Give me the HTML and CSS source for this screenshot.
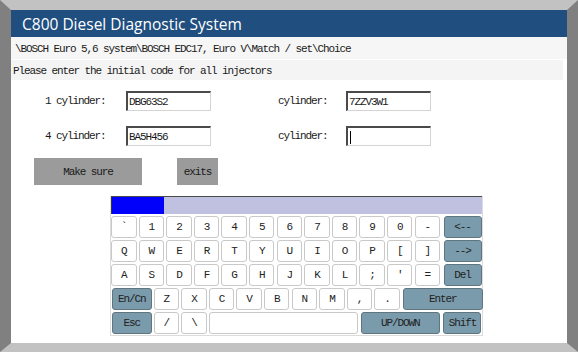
FILE: index.html
```html
<!DOCTYPE html>
<html>
<head>
<meta charset="utf-8">
<link rel="stylesheet" href="styles.css">
</head>
<body>
<div class="frame">
  <div class="screen">
    <div class="header">C800 Diesel Diagnostic System</div>
    <div class="path">\BOSCH Euro 5,6 system\BOSCH EDC17, Euro V\Match / set\Choice</div>
    <div class="prompt">Please enter the initial code for all injectors</div>
    <div class="form">
      <div class="label">1 cylinder:</div>
      <div class="field">DBG63S2</div>
      <div class="label label-r">cylinder:</div>
      <div class="field">7ZZV3W1</div>
      <div class="label">4 cylinder:</div>
      <div class="field">BA5H456</div>
      <div class="label label-r">cylinder:</div>
      <div class="field"><span class="caret"></span></div>
    </div>
    <div class="actions">
      <div class="btn btn-sure">Make sure</div>
      <div class="btn btn-exit">exits</div>
    </div>
    <div class="keyboard">
      <div class="kb-bar"><div class="kb-sel"></div></div>
      <div class="kb-row">
        <div class="key">`</div><div class="key">1</div><div class="key">2</div><div class="key">3</div><div class="key">4</div><div class="key">5</div><div class="key">6</div><div class="key">7</div><div class="key">8</div><div class="key">9</div><div class="key">0</div><div class="key">-</div>
        <div class="key fn fn-s gapl">&lt;--</div>
      </div>
      <div class="kb-row">
        <div class="key">Q</div><div class="key">W</div><div class="key">E</div><div class="key">R</div><div class="key">T</div><div class="key">Y</div><div class="key">U</div><div class="key">I</div><div class="key">O</div><div class="key">P</div><div class="key">[</div><div class="key">]</div>
        <div class="key fn fn-s gapl">--&gt;</div>
      </div>
      <div class="kb-row">
        <div class="key">A</div><div class="key">S</div><div class="key">D</div><div class="key">F</div><div class="key">G</div><div class="key">H</div><div class="key">J</div><div class="key">K</div><div class="key">L</div><div class="key">;</div><div class="key">'</div><div class="key">=</div>
        <div class="key fn fn-s gapl">Del</div>
      </div>
      <div class="kb-row">
        <div class="key fn fn-m">En/Cn</div>
        <div class="key">Z</div><div class="key">X</div><div class="key">C</div><div class="key">V</div><div class="key">B</div><div class="key">N</div><div class="key">M</div><div class="key">,</div><div class="key">.</div>
        <div class="key fn fn-enter">Enter</div>
      </div>
      <div class="kb-row">
        <div class="key fn fn-m">Esc</div>
        <div class="key">/</div><div class="key">\</div>
        <div class="key space"></div>
        <div class="key fn fn-up">UP/DOWN</div>
        <div class="key fn fn-s gapl">Shift</div>
      </div>
    </div>
  </div>
</div>
</body>
</html>
```
FILE: styles.css
```css
* { box-sizing: border-box; }
html, body { margin: 0; padding: 0; background: #c0c0c0; }
.frame {
  width: 578px;
  height: 352px;
  border-style: solid;
  border-width: 10px 11px 9px 11px;
  border-color: #c2c2c2 #808080 #c2c2c2 #808080;
}
.screen {
  width: 556px;
  height: 333px;
  background: #ffffff;
  display: flex;
  flex-direction: column;
  font-family: "Liberation Mono", "DejaVu Sans Mono", monospace;
  font-size: 11px;
  letter-spacing: -1.1px;
  color: #1a1a1a;
}
.header {
  height: 27px;
  background: #1f4e7f;
  color: #ffffff;
  font-family: "Open Sans", "Noto Sans", sans-serif;
  font-size: 15.5px;
  letter-spacing: 0;
  line-height: 29px;
  padding-left: 11px;
}
.path {
  height: 23px;
  line-height: 25px;
  background: #f6f6f6;
  padding-left: 4px;
  border-bottom: 1px solid #ffffff;
}
.prompt {
  height: 20px;
  line-height: 23px;
  background: #f4f4f4;
  margin-right: 4px;
  padding-left: 2px;
}
.form {
  display: grid;
  grid-template-columns: 81px 85px 135px 85px;
  row-gap: 15px;
  grid-auto-rows: 20px;
  margin-top: 11px;
  padding-left: 34px;
}
.label {
  line-height: 20px;
}
.label-r { margin-left: 67px; width: 68px; }
.field {
  height: 20px;
  line-height: 18px;
  padding-left: 1px;
  border-top: 2px solid #4a4a4a;
  border-left: 2px solid #4a4a4a;
  border-right: 1px solid #d4d4d4;
  border-bottom: 1px solid #d4d4d4;
  background: #ffffff;
}
.caret {
  display: inline-block;
  width: 1px;
  height: 13px;
  background: #000;
  vertical-align: middle;
  margin-left: 1px;
}
.actions {
  display: flex;
  margin-top: 12px;
  padding-left: 23px;
  gap: 35px;
}
.btn {
  height: 27px;
  line-height: 28px;
  background: #9b9b9b;
  text-align: center;
  color: #1a1a1a;
}
.btn-sure { width: 108px; }
.btn-exit { width: 41px; }
.keyboard {
  margin-top: 11px;
  margin-left: 99px;
  width: 373px;
  border: 1px solid #dcdcdc;
  border-top: none;
  padding-bottom: 1px;
  display: flex;
  flex-direction: column;
  gap: 2px;
}
.kb-bar {
  height: 18px;
  background: #c0c1e1;
  border-top: 1px solid #4a4a4a;
  display: flex;
}
.kb-sel {
  width: 53px;
  height: 17px;
  background: #0000fb;
  border-left: 1px solid #333;
}
.kb-row {
  display: flex;
  gap: 2.1px;
  height: 22px;
}
.key {
  width: 25.5px;
  height: 22px;
  line-height: 21px;
  text-align: center;
  background: #ffffff;
  border: 1px solid #c9c9c9;
  border-radius: 3px;
  color: #222;
  flex: none;
}
.fn {
  background: #7a9bac;
  border-color: #5f7580;
}
.gapl { margin-left: 1.5px; }
.fn-s { width: 38px; }
.fn-m { width: 39.5px; margin-left: 1px; }
.fn-enter { width: 80px; margin-left: 0.9px; }
.space { width: 149px; }
.fn-up { width: 79px; margin-left: 1px; }
```
